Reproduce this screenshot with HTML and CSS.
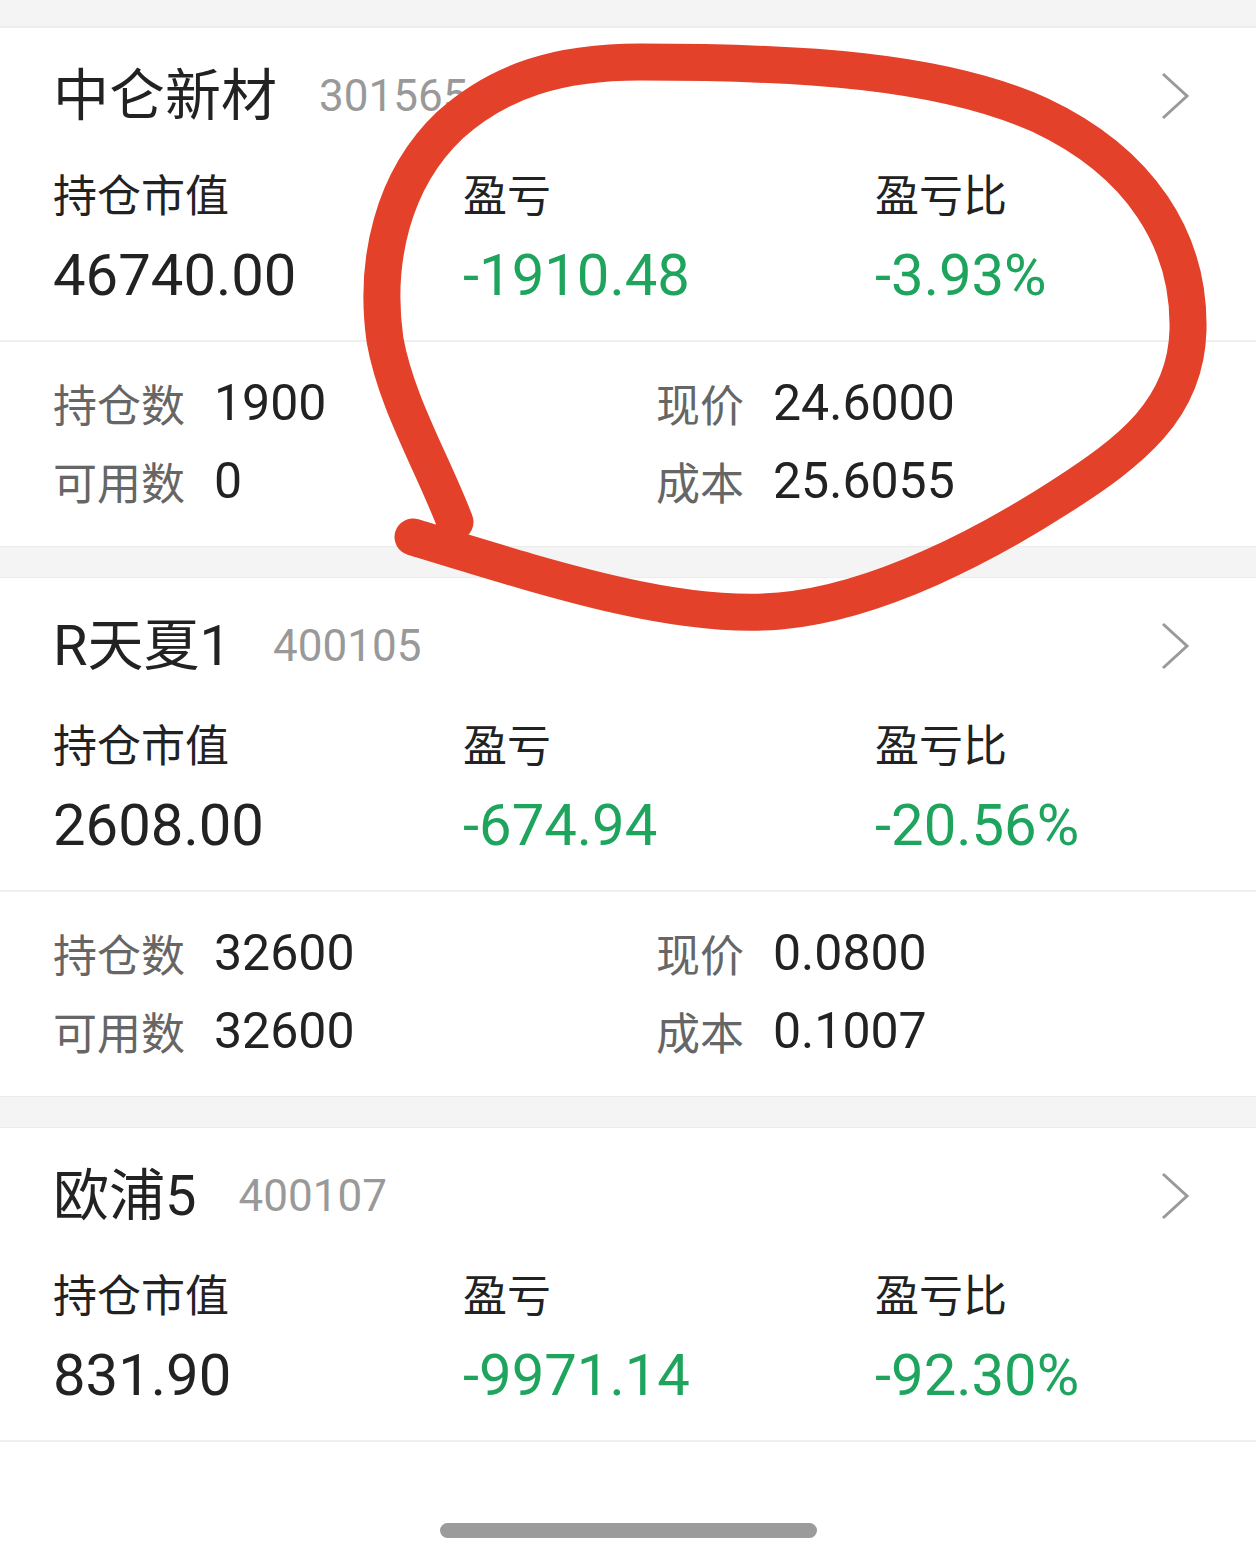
FILE: index.html
```html
<html>
   <head>
      <title>持仓</title>
      <link rel="stylesheet" href="styles.css">
   </head>
   <body>
      <div class="page">
         <div class="gap gap-top"></div>

         <section class="card">
            <div class="head">
               <span class="name">中仑新材</span>
               <span class="code">301565</span>
               <svg class="chevron" viewBox="0 0 30 48"><polyline points="3,2 27,24 3,46" /></svg>
            </div>
            <div class="stats">
               <div class="label">持仓市值</div>
               <div class="label">盈亏</div>
               <div class="label">盈亏比</div>
               <div class="value">46740.00</div>
               <div class="value down">-1910.48</div>
               <div class="value down">-3.93%</div>
            </div>
            <div class="detail">
               <div class="pair"><span class="key">持仓数</span><span class="num">1900</span></div>
               <div class="pair"><span class="key">现价</span><span class="num">24.6000</span></div>
               <div class="pair"><span class="key">可用数</span><span class="num">0</span></div>
               <div class="pair"><span class="key">成本</span><span class="num">25.6055</span></div>
            </div>
         </section>

         <div class="gap"></div>

         <section class="card">
            <div class="head">
               <span class="name">R天夏1</span>
               <span class="code">400105</span>
               <svg class="chevron" viewBox="0 0 30 48"><polyline points="3,2 27,24 3,46" /></svg>
            </div>
            <div class="stats">
               <div class="label">持仓市值</div>
               <div class="label">盈亏</div>
               <div class="label">盈亏比</div>
               <div class="value">2608.00</div>
               <div class="value down">-674.94</div>
               <div class="value down">-20.56%</div>
            </div>
            <div class="detail">
               <div class="pair"><span class="key">持仓数</span><span class="num">32600</span></div>
               <div class="pair"><span class="key">现价</span><span class="num">0.0800</span></div>
               <div class="pair"><span class="key">可用数</span><span class="num">32600</span></div>
               <div class="pair"><span class="key">成本</span><span class="num">0.1007</span></div>
            </div>
         </section>

         <div class="gap"></div>

         <section class="card">
            <div class="head">
               <span class="name">欧浦5</span>
               <span class="code">400107</span>
               <svg class="chevron" viewBox="0 0 30 48"><polyline points="3,2 27,24 3,46" /></svg>
            </div>
            <div class="stats">
               <div class="label">持仓市值</div>
               <div class="label">盈亏</div>
               <div class="label">盈亏比</div>
               <div class="value">831.90</div>
               <div class="value down">-9971.14</div>
               <div class="value down">-92.30%</div>
            </div>
         </section>

         <div class="home-bar"></div>

         <!-- hand drawn mark on top of the screenshot -->
         <svg class="scribble" viewBox="0 0 1256 1560">
            <path d="M 455 522
                     C 432 462, 396 402, 385 340
                     C 374 262, 392 180, 450 125
                     C 500 80, 560 62, 640 62
                     C 800 62, 940 70, 1040 115
                     C 1140 162, 1190 240, 1188 330
                     C 1186 410, 1130 452, 1060 497
                     C 990 542, 880 602, 780 611
                     C 680 620, 560 582, 413 537" />
         </svg>
      </div>
   </body>
</html>
```

FILE: styles.css
```css
html {
   margin: 0px;
   padding: 0px;
}

body {
   margin: 0px;
   background-color: white;
   font-family: Roboto, "Noto Sans CJK SC", sans-serif;
   color: #222;
}

.page {
   position: relative;
   width: 1256px;
   height: 1560px;
   overflow: hidden;
}

.gap {
   height: 30px;
   background-color: #f4f4f4;
   border-top: 1px solid #ececec;
   border-bottom: 1px solid #ececec;
}

.gap-top {
   height: 26px;
   border-top: none;
   border-bottom: 2px solid #ececec;
}

.card {
   background-color: white;
}

.head {
   display: flex;
   align-items: center;
   height: 136px;
   padding-left: 53px;
   padding-right: 66px;
}

.name {
   font-size: 56px;
   line-height: 70px;
   color: #222;
}

.code {
   font-size: 44px;
   line-height: 70px;
   color: #999;
   margin-left: 42px;
}

.chevron {
   width: 30px;
   height: 48px;
   margin-left: auto;
}

.chevron polyline {
   fill: none;
   stroke: #9a9a9a;
   stroke-width: 3;
}

.stats {
   display: grid;
   grid-template-columns: 410px 412px auto;
   padding: 3px 0px 17px 53px;
   border-bottom: 2px solid #efefef;
}

.label {
   font-size: 44px;
   line-height: 60px;
   color: #222;
}

.value {
   font-size: 58px;
   line-height: 96px;
   color: #222;
}

.down {
   color: #1ea45c;
}

.detail {
   display: grid;
   grid-template-columns: 603px auto;
   padding: 22px 0px 26px 53px;
}

.pair {
   display: flex;
   align-items: center;
   gap: 29px;
   height: 78px;
}

.key {
   font-size: 44px;
   color: #666;
}

.num {
   font-size: 50px;
   color: #222;
}

.home-bar {
   width: 377px;
   height: 15px;
   margin: 81px auto 0px auto;
   border-radius: 8px;
   background-color: #9b9b9b;
}

.scribble {
   position: absolute;
   top: 0px;
   left: 0px;
   width: 1256px;
   height: 1560px;
   pointer-events: none;
}

.scribble path {
   fill: none;
   stroke: #e4412a;
   stroke-width: 37;
   stroke-linecap: round;
   stroke-linejoin: round;
}
```
